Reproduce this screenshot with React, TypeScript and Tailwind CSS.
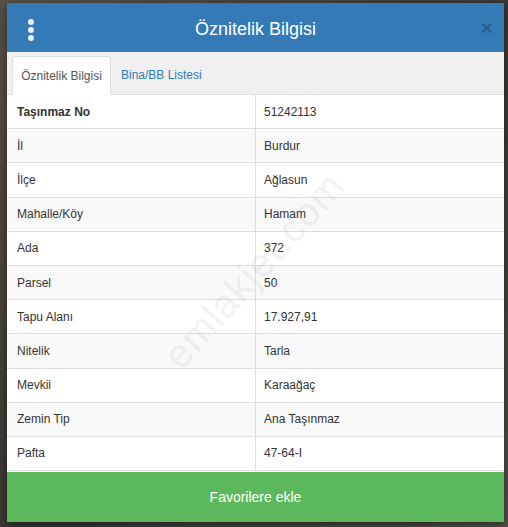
import React from 'react'

const rows: [string, string][] = [
  ['Taşınmaz No', '51242113'],
  ['İl', 'Burdur'],
  ['İlçe', 'Ağlasun'],
  ['Mahalle/Köy', 'Hamam'],
  ['Ada', '372'],
  ['Parsel', '50'],
  ['Tapu Alanı', '17.927,91'],
  ['Nitelik', 'Tarla'],
  ['Mevkii', 'Karaağaç'],
  ['Zemin Tip', 'Ana Taşınmaz'],
  ['Pafta', '47-64-I'],
]

export default function App() {
  return (
    <div
      className="relative w-[508px] h-[527px] overflow-hidden bg-[#4a443e] bg-gradient-to-br from-[#5a5148] via-[#3b3833] to-[#55524a] pt-[3px] pl-[7px]"
      style={{ fontFamily: '"Liberation Sans", Arial, sans-serif' }}
    >
      <div className="w-[497px] h-[519px] flex flex-col bg-white shadow-[0_3px_9px_rgba(0,0,0,0.5)]">
        {/* header */}
        <div className="relative h-[49px] shrink-0 flex items-center justify-center bg-[#337ab7]">
          <div className="absolute left-[21px] top-[16px] flex flex-col gap-[2px]">
            <span className="block w-[6px] h-[6px] rounded-full bg-white/90" />
            <span className="block w-[6px] h-[6px] rounded-full bg-white/90" />
            <span className="block w-[6px] h-[6px] rounded-full bg-white/90" />
          </div>
          <h1 className="text-white text-[18px] leading-none pt-[2px]">Öznitelik Bilgisi</h1>
          <span className="absolute right-[11px] top-[14px] text-[#2a5e8e] text-[21px] font-bold leading-none">×</span>
        </div>

        {/* tabs */}
        <div className="h-[43px] shrink-0 flex items-end bg-[#f0f0f0] pl-[5px] border-b border-[#dddddd]">
          <div className="h-[39px] w-[99px] -mb-px flex items-center justify-center bg-white border border-[#dddddd] border-b-white rounded-t-[3px] text-[12px] text-[#555555]">
            Öznitelik Bilgisi
          </div>
          <div className="h-[39px] px-[10px] flex items-center text-[12px] text-[#337ab7]">
            Bina/BB Listesi
          </div>
        </div>

        {/* table */}
        <div className="flex-1 flex flex-col">
          {rows.map(([label, value], i) => (
            <div
              key={label}
              className={`h-[34.2px] flex border-b border-[#dddddd] text-[12px] text-[#333333] ${i % 2 === 1 ? 'bg-[#f9f9f9]' : 'bg-white'}`}
            >
              <div className={`w-[249px] shrink-0 flex items-center pl-[10px] border-r border-[#dddddd] ${i === 0 ? 'font-bold' : ''}`}>
                {label}
              </div>
              <div className="flex-1 flex items-center pl-[8px]">{value}</div>
            </div>
          ))}
        </div>

        <button className="h-[50px] shrink-0 w-full bg-[#5cb85c] text-white text-[14px]">Favorilere ekle</button>
      </div>

      <div className="pointer-events-none absolute left-[130px] top-[240px] -rotate-[48deg] origin-center text-[40px] text-[#9a9a9a]/15 tracking-wide select-none">
        emlakjet.com
      </div>
    </div>
  )
}
